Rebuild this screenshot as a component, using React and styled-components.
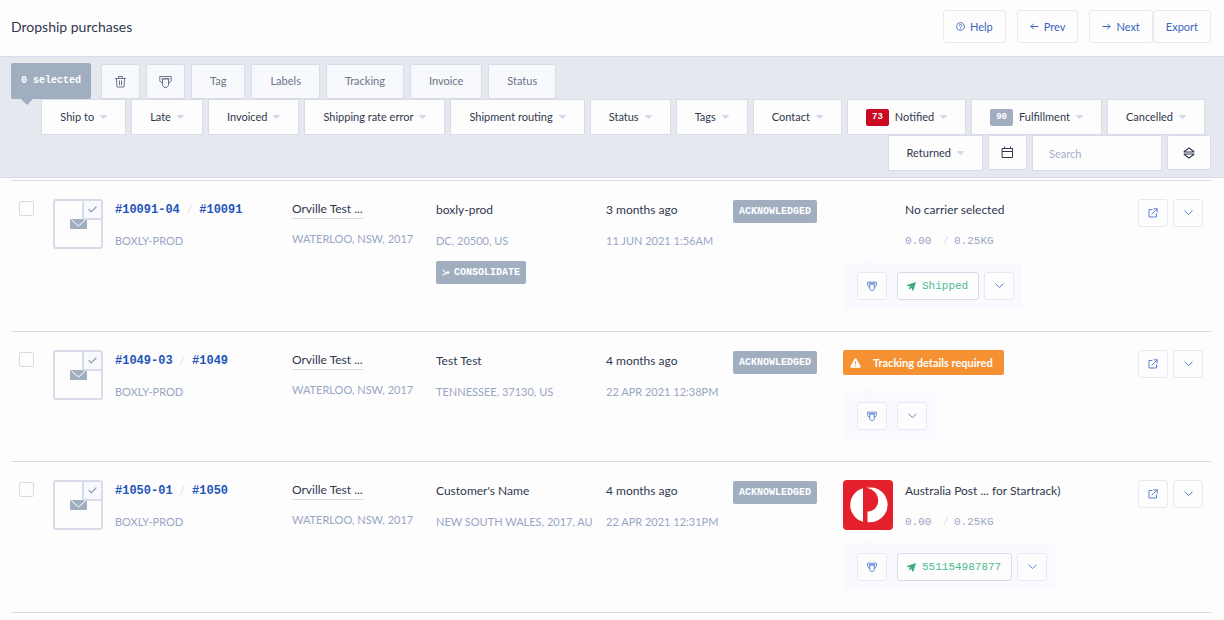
import React from "react";
import styled, { createGlobalStyle } from "styled-components";

const sans = 'Lato, "Liberation Sans", sans-serif';
const mono = '"Liberation Mono", monospace';
const c = {
  page: "#fefdfe",
  bar: "#e6e8f0",
  line: "#d8dce8",
  soft: "#e6e8f2",
  text: "#2e384d",
  muted: "#98a6c4",
  grey: "#a1aebf",
  link: "#3a66bd",
  order: "#2355b8",
  green: "#48bb8d",
  panel: "#f9faff",
};

const GlobalStyle = createGlobalStyle`
  *, *::before, *::after { box-sizing: border-box; }
  body { margin: 0; background: ${c.page}; color: ${c.text}; font: 11px/20px ${sans}; }
  button, input { font: inherit; color: inherit; margin: 0; }
  button { cursor: pointer; white-space: nowrap; }
  svg { display: block; flex: none; }
`;

const Header = styled.header`
  display: flex;
  align-items: center;
  justify-content: space-between;
  padding: 10px 13px 13px 11px;
`;
const Title = styled.h1`
  margin: 0;
  font-size: 14px;
  line-height: 22px;
  font-weight: 400;
`;
const HeaderNav = styled.nav`
  display: flex;
  gap: 11px;
`;
const ButtonPair = styled.div`
  display: flex;
`;
const HeaderButton = styled.button`
  display: flex;
  align-items: center;
  gap: 5px;
  height: 33px;
  padding: 0 12px;
  border: 1px solid ${c.soft};
  border-radius: 3px;
  background: ${c.page};
  color: ${c.link};
`;

const Toolbar = styled.section`
  padding: 6px 13px 6px 11px;
  border-top: 1px solid ${c.line};
  border-bottom: 1px solid ${c.line};
  background: ${c.bar};
`;
const BulkRow = styled.div`
  display: flex;
  flex-wrap: wrap;
  align-items: center;
  column-gap: 6px;
`;
const Selected = styled.div`
  position: relative;
  height: 36px;
  padding: 0 10px;
  margin-right: 4px;
  border-radius: 2px;
  background: ${c.grey};
  color: #fff;
  font: bold 10px/36px ${mono};
  &::after {
    content: "";
    position: absolute;
    left: 10px;
    top: 100%;
    border: 6px solid transparent;
    border-top-color: ${c.grey};
    border-bottom: 0;
  }
`;
const BulkButton = styled.button`
  display: flex;
  align-items: center;
  height: 35px;
  padding: 0 ${(p) => (p.$icon ? 12 : 18)}px;
  border: 1px solid ${c.line};
  border-radius: 2px;
  background: #f7f9fc;
  color: #6c7488;
`;
const FilterRow = styled.div`
  display: flex;
  flex-wrap: wrap;
  justify-content: flex-end;
  column-gap: 5px;
  padding-right: ${(p) => p.$inset || 0}px;
`;
const Filter = styled.button`
  display: flex;
  align-items: center;
  gap: 6px;
  height: 36px;
  padding: 0 18px;
  border: 1px solid ${c.line};
  background: ${c.page};
`;
const ToolButton = styled.button`
  display: flex;
  align-items: center;
  justify-content: center;
  width: ${(p) => p.$w}px;
  height: 35px;
  padding: 0;
  border: 1px solid ${c.line};
  border-radius: 2px;
  background: ${c.page};
`;
const Search = styled.input`
  width: 130px;
  height: 36px;
  padding: 0 16px;
  border: 1px solid ${c.line};
  border-radius: 0;
  background: ${c.page};
  &::placeholder { color: #a3b1cb; opacity: 1; }
`;
const Count = styled.span`
  padding: 0 6px;
  border-radius: 2px;
  background: ${(p) => (p.$alert ? "#cb0a22" : c.grey)};
  color: #fff;
  font: bold 9px/17px ${mono};
`;

const Main = styled.main`
  padding: 2px 13px 0 11px;
`;
const Table = styled.table`
  width: 100%;
  table-layout: fixed;
  border-collapse: separate;
  border-spacing: 0;
  border-top: 1px solid ${c.line};
`;
const Col = styled.col`
  width: ${(p) => (p.$w ? p.$w + "px" : "auto")};
`;
const Cell = styled.td`
  padding: 18px 0 22px;
  border-bottom: 1px solid ${c.line};
  vertical-align: top;
  white-space: nowrap;
`;
const Check = styled.input`
  display: block;
  appearance: none;
  width: 15px;
  height: 15px;
  margin: 2px 0 0 8px;
  border: 1px solid ${c.line};
  border-radius: 2px;
  background: ${c.page};
`;
const OrderBox = styled.div`
  display: flex;
  gap: 12px;
`;
const Thumb = styled.div`
  position: relative;
  display: flex;
  align-items: center;
  justify-content: center;
  width: 50px;
  height: 50px;
  border: 2px solid ${c.line};
  border-radius: 3px;
`;
const ThumbBadge = styled.span`
  position: absolute;
  top: 0;
  right: 0;
  display: flex;
  align-items: center;
  justify-content: center;
  width: 19px;
  height: 19px;
  border: solid ${c.line};
  border-width: 0 0 2px 2px;
  border-radius: 0 0 0 3px;
  background: #f7f9fc;
`;
const Stack = styled.div`
  display: flex;
  flex-direction: column;
  align-items: flex-start;
  gap: 12px;
`;
const Primary = styled.div`
  display: flex;
  font-size: 12px;
  line-height: 22px;
`;
const OrderLink = styled.a`
  color: ${c.order};
  font: bold 12px/22px ${mono};
  text-decoration: none;
`;
const Slash = styled.span`
  padding: 0 7px;
  color: ${c.line};
`;
const Customer = styled.a`
  color: inherit;
  font-size: 12px;
  line-height: 18px;
  margin-top: 1px;
  border-bottom: 1px solid ${c.line};
  text-decoration: none;
`;
const Secondary = styled.div`
  color: ${c.muted};
  font-size: 11px;
  line-height: 16px;
  text-transform: uppercase;
`;
const Figures = styled.div`
  display: flex;
  color: ${c.muted};
  font: 11px/16px ${mono};
`;
const FigureSlash = styled.span`
  padding: 0 5px 0 11px;
  color: ${c.line};
`;
const Badge = styled.span`
  display: inline-block;
  margin-top: 1px;
  padding: 0 6px;
  border-radius: 2px;
  background: ${c.grey};
  color: #fff;
  font: bold 10px/23px ${mono};
`;
const Consolidate = styled.button`
  display: flex;
  align-items: center;
  gap: 4px;
  height: 23px;
  padding: 0 6px;
  border: 0;
  border-radius: 2px;
  background: ${c.grey};
  color: #fff;
  font: bold 10px/23px ${mono};
`;
const Carrier = styled.div`
  display: flex;
  gap: 12px;
`;
const CarrierLogo = styled.div`
  width: 50px;
`;
const Alert = styled.div`
  display: flex;
  align-items: center;
  gap: 12px;
  width: fit-content;
  height: 25px;
  padding: 0 11px 0 7px;
  margin-bottom: 18px;
  border-radius: 2px;
  background: #f69133;
  color: #fff;
  font-weight: 700;
`;
const Panel = styled.div`
  position: relative;
  display: flex;
  width: fit-content;
  margin-top: 14px;
  padding: 9px 8px 9px 14px;
  gap: 5px;
  border-radius: 3px;
  background: ${c.panel};
  &::before {
    content: "";
    position: absolute;
    left: 18px;
    bottom: 100%;
    border: 7px solid transparent;
    border-bottom-color: ${c.panel};
    border-top: 0;
  }
`;
const PrintSlot = styled.div`
  margin-right: 5px;
`;
const SmallButton = styled.button`
  display: flex;
  align-items: center;
  justify-content: center;
  width: 30px;
  height: 28px;
  padding: 0;
  border: 1px solid ${c.soft};
  border-radius: 3px;
  background: ${c.page};
  color: #5b82d0;
`;
const TrackButton = styled.button`
  display: flex;
  align-items: center;
  gap: 6px;
  height: 28px;
  padding: 0 10px 0 9px;
  border: 1px solid ${c.line};
  border-radius: 3px;
  background: ${c.page};
  color: ${c.green};
  font: 11px/26px ${mono};
`;
const Actions = styled.div`
  display: flex;
  justify-content: flex-end;
  gap: 5px;
  padding-right: 8px;
`;

const Svg = ({ w, h = w, vb, sw = 1, children }) => (
  <svg width={w} height={h} viewBox={vb || `0 0 ${w} ${h}`} fill="none" stroke="currentColor" strokeWidth={sw} strokeLinecap="round" strokeLinejoin="round" aria-hidden="true">
    {children}
  </svg>
);
const Caret = () => (
  <svg width="7" height="4" viewBox="0 0 7 4" aria-hidden="true">
    <path d="M.7 0h5.6c.6 0 .9.6.5 1L4 3.8a.7.7 0 0 1-1 0L.2 1C-.2.6.1 0 .7 0z" fill="#d5daea" />
  </svg>
);
const HelpIcon = () => (
  <Svg w={9} vb="0 0 10 10" sw={0.9}>
    <circle cx="5" cy="5" r="4.4" />
    <path d="M3.6 4a1.4 1.4 0 1 1 2 1.2c-.4.2-.6.4-.6.8M5 7.4v.1" />
  </Svg>
);
const LeftIcon = () => <Svg w={9}><path d="M8 4.500H1M3.500 2L1 4.500 3.500 7" /></Svg>;
const RightIcon = () => <Svg w={9}><path d="M1 4.500h7M5.500 2L8 4.500 5.500 7" /></Svg>;
const TrashIcon = () => (
  <Svg w={13}>
    <path d="M1.500 3.500h10M4.500 3.500v-2h4v2M2.500 3.500l.5 8.500h7l.5-8.500M5.500 5.800v4M7.500 5.800v4" />
  </Svg>
);
const PrintIcon = ({ size = 13 }) => (
  <Svg w={size} vb="0 0 13 13" sw={size < 13 ? 1.2 : 1}>
    <path d="M3.500 7.500H2L.8 5.800V1.500h11.400v4.300L11 7.500H9.500M3.500 4v6.500L5 12.300h3l1.500-1.800V4zM3 4h7" />
  </Svg>
);
const CalendarIcon = () => (
  <Svg w={13}><path d="M1.500 2.500h10v9h-10zM1.500 5.500h10M3.500 1v1.500M9.500 1v1.500" /></Svg>
);
const SortIcon = () => (
  <Svg w={12} sw={1.1}><path d="M6 1l4.800 3.500v.5H1.200v-.5zM6 11l4.800-3.500V7H1.200v.5z" /></Svg>
);
const ChevronIcon = () => <Svg w={9} h={6}><path d="M.8 1l3.700 3.500L8.200 1" /></Svg>;
const OpenIcon = () => (
  <Svg w={10}><path d="M4 1.500H1v7.500h7.500V6M5.800.8h3.400v3.400M9 1L4 6" /></Svg>
);
const CheckIcon = () => (
  <Svg w={9} h={7} sw={1.2}><g stroke="#8d9bb2"><path d="M1 3.500L3.300 5.800 8 1" /></g></Svg>
);
const MailIcon = () => (
  <svg width="17" height="10" viewBox="0 0 17 10" aria-hidden="true">
    <rect width="17" height="10" rx="1" fill={c.grey} />
    <path d="M1.500.8L8.500 7l7-6.200" fill="none" stroke="#fff" strokeWidth="1" />
  </svg>
);
const MergeIcon = () => (
  <Svg w={8} h={7} sw={1.2}><path d="M.8 1C2.300 1 2.500 3.500 4 3.500S2.300 6 .8 6M4 3.500h3M5.800 2.300L7 3.500 5.800 4.700" /></Svg>
);
const PlaneIcon = () => (
  <svg width="9" height="9" viewBox="0 0 9 9" aria-hidden="true">
    <path d="M9 0L6.300 8.800 5 8.300 4.600 5.600 2.800 7.300 1.600 6.200 3.500 4.400.5 4 0 2.900z" fill="#36ab7c" />
  </svg>
);
const WarningIcon = () => (
  <svg width="11" height="10" viewBox="0 0 11 10" aria-hidden="true">
    <path d="M5.500.2c.4 0 .7.200.9.500l4.200 7.600c.4.700 0 1.500-.8 1.500H1.200c-.8 0-1.200-.8-.8-1.500L4.600.7c.2-.3.5-.5.9-.5z" fill="#fff" />
    <path d="M5.500 3.200v3M5.500 7.600v1" stroke="#f69133" strokeWidth="1.300" />
  </svg>
);
const AusPostLogo = () => (
  <svg width="50" height="50" viewBox="0 0 50 50" role="img" aria-label="Australia Post">
    <rect width="50" height="50" rx="4" fill="#e3202b" />
    <path d="M20 8.300v33.400A17.300 17.300 0 0 1 20 8.300z" fill="#fff" />
    <path d="M23.500 7.800A17.400 17.400 0 1 1 24.500 42V31.500c6 .2 10.700-4.700 10.700-10.900 0-6.500-4.700-11.300-11.700-12.800z" fill="#fff" />
  </svg>
);

const bulk = ["Tag", "Labels", "Tracking", "Invoice", "Status"];
const filters = [
  { label: "Ship to" },
  { label: "Late" },
  { label: "Invoiced" },
  { label: "Shipping rate error" },
  { label: "Shipment routing" },
  { label: "Status" },
  { label: "Tags" },
  { label: "Contact" },
  { label: "Notified", count: 73, alert: true },
  { label: "Fulfillment", count: 90 },
  { label: "Cancelled" },
];
const orders = [
  { id: "#10091-04", parent: "#10091", to: "boxly-prod", place: "DC, 20500, US", consolidate: true, ago: "3 months ago", date: "11 Jun 2021 1:56am", carrier: "No carrier selected", track: "Shipped" },
  { id: "#1049-03", parent: "#1049", to: "Test Test", place: "Tennessee, 37130, US", ago: "4 months ago", date: "22 Apr 2021 12:38pm" },
  { id: "#1050-01", parent: "#1050", to: "Customer's Name", place: "New South Wales, 2017, AU", ago: "4 months ago", date: "22 Apr 2021 12:31pm", carrier: "Australia Post ... for Startrack)", logo: true, track: "551154987877" },
];

const FilterButton = ({ label, count, alert }) => (
  <Filter type="button" aria-haspopup="menu">
    {count && <Count $alert={alert}>{count}</Count>}
    {label}
    <Caret />
  </Filter>
);

const OrderRow = ({ o }) => (
  <tr>
    <Cell><Check type="checkbox" aria-label={`Select ${o.id}`} /></Cell>
    <Cell>
      <OrderBox>
        <Thumb>
          <MailIcon />
          <ThumbBadge><CheckIcon /></ThumbBadge>
        </Thumb>
        <Stack>
          <Primary>
            <OrderLink href="#order">{o.id}</OrderLink>
            <Slash>/</Slash>
            <OrderLink href="#parent">{o.parent}</OrderLink>
          </Primary>
          <Secondary>boxly-prod</Secondary>
        </Stack>
      </OrderBox>
    </Cell>
    <Cell>
      <Stack>
        <Customer href="#customer">Orville Test ...</Customer>
        <Secondary>Waterloo, NSW, 2017</Secondary>
      </Stack>
    </Cell>
    <Cell>
      <Stack>
        <Primary>{o.to}</Primary>
        <Secondary>{o.place}</Secondary>
        {o.consolidate && <Consolidate type="button"><MergeIcon />CONSOLIDATE</Consolidate>}
      </Stack>
    </Cell>
    <Cell>
      <Stack>
        <Primary>{o.ago}</Primary>
        <Secondary>{o.date}</Secondary>
      </Stack>
    </Cell>
    <Cell><Badge>ACKNOWLEDGED</Badge></Cell>
    <Cell>
      {o.carrier ? (
        <Carrier>
          <CarrierLogo>{o.logo && <AusPostLogo />}</CarrierLogo>
          <Stack>
            <Primary>{o.carrier}</Primary>
            <Figures>0.00<FigureSlash>/</FigureSlash>0.25KG</Figures>
          </Stack>
        </Carrier>
      ) : (
        <Alert role="status"><WarningIcon />Tracking details required</Alert>
      )}
      <Panel>
        <PrintSlot><SmallButton type="button" aria-label="Print"><PrintIcon size={10} /></SmallButton></PrintSlot>
        {o.track && <TrackButton type="button"><PlaneIcon />{o.track}</TrackButton>}
        <SmallButton type="button" aria-label="More shipping options"><ChevronIcon /></SmallButton>
      </Panel>
    </Cell>
    <Cell>
      <Actions>
        <SmallButton type="button" aria-label="Open"><OpenIcon /></SmallButton>
        <SmallButton type="button" aria-label="More"><ChevronIcon /></SmallButton>
      </Actions>
    </Cell>
  </tr>
);

export default function App() {
  return (
    <>
      <GlobalStyle />
      <Header>
        <Title>Dropship purchases</Title>
        <HeaderNav>
          <HeaderButton type="button"><HelpIcon />Help</HeaderButton>
          <HeaderButton type="button"><LeftIcon />Prev</HeaderButton>
          <ButtonPair>
            <HeaderButton type="button"><RightIcon />Next</HeaderButton>
            <HeaderButton type="button">Export</HeaderButton>
          </ButtonPair>
        </HeaderNav>
      </Header>
      <Toolbar>
        <BulkRow>
          <Selected>0 selected</Selected>
          <BulkButton type="button" $icon aria-label="Delete"><TrashIcon /></BulkButton>
          <BulkButton type="button" $icon aria-label="Print"><PrintIcon /></BulkButton>
          {bulk.map((b) => <BulkButton type="button" key={b}>{b}</BulkButton>)}
        </BulkRow>
        <FilterRow $inset={6}>
          {filters.map((f) => <FilterButton key={f.label} {...f} />)}
        </FilterRow>
        <FilterRow>
          <FilterButton label="Returned" />
          <ToolButton type="button" $w={39} aria-label="Date range"><CalendarIcon /></ToolButton>
          <Search type="search" placeholder="Search" aria-label="Search" />
          <ToolButton type="button" $w={44} aria-label="Sort"><SortIcon /></ToolButton>
        </FilterRow>
      </Toolbar>
      <Main>
        <Table>
          <colgroup>
            <Col $w={42} /><Col $w={239} /><Col $w={144} /><Col $w={170} /><Col $w={127} /><Col $w={110} /><Col /><Col $w={76} />
          </colgroup>
          <tbody>
            {orders.map((o) => <OrderRow key={o.id} o={o} />)}
          </tbody>
        </Table>
      </Main>
    </>
  );
}
